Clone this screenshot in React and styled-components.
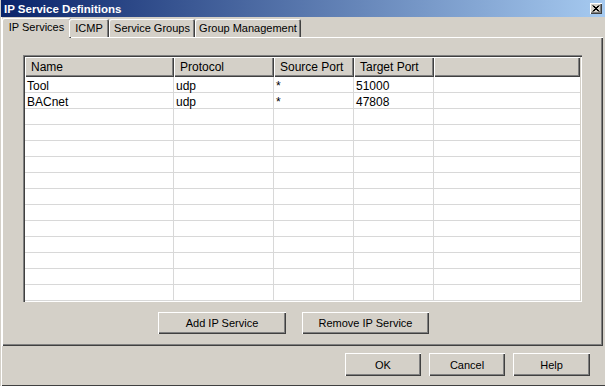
import styled, { createGlobalStyle } from "styled-components";

const GlobalStyle = createGlobalStyle`
  html, body {
    margin: 0;
    padding: 0;
    background: #d4d0c8;
  }
  body {
    font-family: "Liberation Sans", Arial, sans-serif;
    font-size: 11px;
    color: #000;
  }
`;

const Window = styled.div`
  width: 605px;
  height: 386px;
  box-sizing: border-box;
  background: #d4d0c8;
  display: flex;
  flex-direction: column;
  box-shadow: inset 1px 0 #d4d0c8, inset 2px 0 #fff, inset 0 -1px #404040;
  overflow: hidden;
`;

const TitleBar = styled.div`
  height: 17px;
  margin-left: 1px;
  display: flex;
  align-items: center;
  justify-content: space-between;
  padding: 0 3px 0 3px;
  background: linear-gradient(to right, #0a246a, #a6caf0);
  color: #fff;
  font-weight: bold;
  font-size: 11.5px;
`;

const CloseButton = styled.div`
  width: 12px;
  height: 11px;
  box-sizing: border-box;
  display: flex;
  align-items: center;
  justify-content: center;
  background: #d4d0c8;
  box-shadow: inset 1px 1px #fff, inset -1px -1px #404040, inset -2px -2px #808080;
`;

const TabRow = styled.div`
  height: 20px;
  display: flex;
  align-items: flex-end;
  padding-left: 4px;
  position: relative;
  z-index: 1;
`;

const Tab = styled.div`
  box-sizing: border-box;
  width: ${(p) => p.$w}px;
  height: ${(p) => (p.$active ? 20 : 18)}px;
  margin: ${(p) => (p.$active ? "0 -2px -1px -2px" : "0")};
  padding-top: 3px;
  text-align: center;
  background: #d4d0c8;
  border-radius: 2px 2px 0 0;
  box-shadow: inset 1px 1px #fff, inset -1px 0 #404040, inset -2px 0 #808080;
  white-space: nowrap;
`;

const Panel = styled.div`
  margin-left: 2px;
  width: 601px;
  height: 309px;
  box-sizing: border-box;
  padding: 18px 21px 0 21px;
  box-shadow: inset 1px 1px #fff, inset -1px -1px #404040, inset -2px -2px #808080;
  display: flex;
  flex-direction: column;
`;

const ListView = styled.div`
  width: 559px;
  height: 247px;
  box-sizing: border-box;
  padding: 2px;
  background: #fff;
  font-size: 12px;
  line-height: 14px;
  box-shadow: inset 1px 1px #808080, inset 2px 2px #404040, inset -1px -1px #fff,
    inset -2px -2px #d4d0c8;
  overflow: hidden;
  display: flex;
  flex-direction: column;
`;

const HeaderRow = styled.div`
  display: flex;
  height: 20px;
  flex-shrink: 0;
`;

const HeaderCell = styled.div`
  box-sizing: border-box;
  width: ${(p) => (p.$w ? `${p.$w}px` : "auto")};
  flex: ${(p) => (p.$w ? "none" : "1")};
  height: 20px;
  padding: 3px 0 0 6px;
  background: #d4d0c8;
  box-shadow: inset 1px 1px #fff, inset -1px -1px #404040, inset -2px -2px #808080;
  white-space: nowrap;
`;

const Row = styled.div`
  display: flex;
  height: 16px;
  flex-shrink: 0;
  box-sizing: border-box;
  border-bottom: 1px solid #d8d8d8;
`;

const Cell = styled.div`
  box-sizing: border-box;
  width: ${(p) => (p.$w ? `${p.$w}px` : "auto")};
  flex: ${(p) => (p.$w ? "none" : "1")};
  padding: 2px 0 0 2px;
  border-right: ${(p) => (p.$w ? "1px solid #d8d8d8" : "none")};
  white-space: nowrap;
`;

const ActionRow = styled.div`
  display: flex;
  gap: 16px;
  padding: 10px 0 0 135px;
`;

const Button = styled.button`
  width: ${(p) => p.$w}px;
  height: ${(p) => p.$h}px;
  box-sizing: border-box;
  padding: 0;
  border: none;
  background: #d4d0c8;
  font-family: "Liberation Sans", Arial, sans-serif;
  font-size: 11px;
  color: #000;
  box-shadow: inset 1px 1px #fff, inset -1px -1px #404040, inset -2px -2px #808080;
`;

const Footer = styled.div`
  display: flex;
  justify-content: flex-end;
  gap: 8px;
  padding: 7px 15px 0 0;
`;

const columns = [
  { key: "name", label: "Name", w: 149 },
  { key: "protocol", label: "Protocol", w: 100 },
  { key: "source", label: "Source Port", w: 80 },
  { key: "target", label: "Target Port", w: 80 },
];

const services = [
  { name: "Tool", protocol: "udp", source: "*", target: "51000" },
  { name: "BACnet", protocol: "udp", source: "*", target: "47808" },
];

const tabs = [
  { label: "IP Services", w: 69, active: true },
  { label: "ICMP", w: 40 },
  { label: "Service Groups", w: 86 },
  { label: "Group Management", w: 106 },
];

export default function App() {
  const rows = [...services];
  while (rows.length < 14) rows.push(null);

  return (
    <>
      <GlobalStyle />
      <Window>
        <TitleBar>
          <span>IP Service Definitions</span>
          <CloseButton>
            <svg width="8" height="7" viewBox="0 0 8 7">
              <path d="M0.5 0.5 L6.5 6.5 M1.5 0.5 L7.5 6.5 M6.5 0.5 L0.5 6.5 M7.5 0.5 L1.5 6.5" stroke="#000" strokeWidth="1" />
            </svg>
          </CloseButton>
        </TitleBar>
        <TabRow>
          {tabs.map((t) => (
            <Tab key={t.label} $w={t.w} $active={t.active}>
              {t.label}
            </Tab>
          ))}
        </TabRow>
        <Panel>
          <ListView>
            <HeaderRow>
              {columns.map((c) => (
                <HeaderCell key={c.key} $w={c.w}>
                  {c.label}
                </HeaderCell>
              ))}
              <HeaderCell />
            </HeaderRow>
            {rows.map((r, i) => (
              <Row key={i}>
                {columns.map((c) => (
                  <Cell key={c.key} $w={c.w}>
                    {r ? r[c.key] : ""}
                  </Cell>
                ))}
                <Cell />
              </Row>
            ))}
          </ListView>
          <ActionRow>
            <Button $w={128} $h={22}>Add IP Service</Button>
            <Button $w={127} $h={22}>Remove IP Service</Button>
          </ActionRow>
        </Panel>
        <Footer>
          <Button $w={76} $h={23}>OK</Button>
          <Button $w={76} $h={23}>Cancel</Button>
          <Button $w={77} $h={23}>Help</Button>
        </Footer>
      </Window>
    </>
  );
}
